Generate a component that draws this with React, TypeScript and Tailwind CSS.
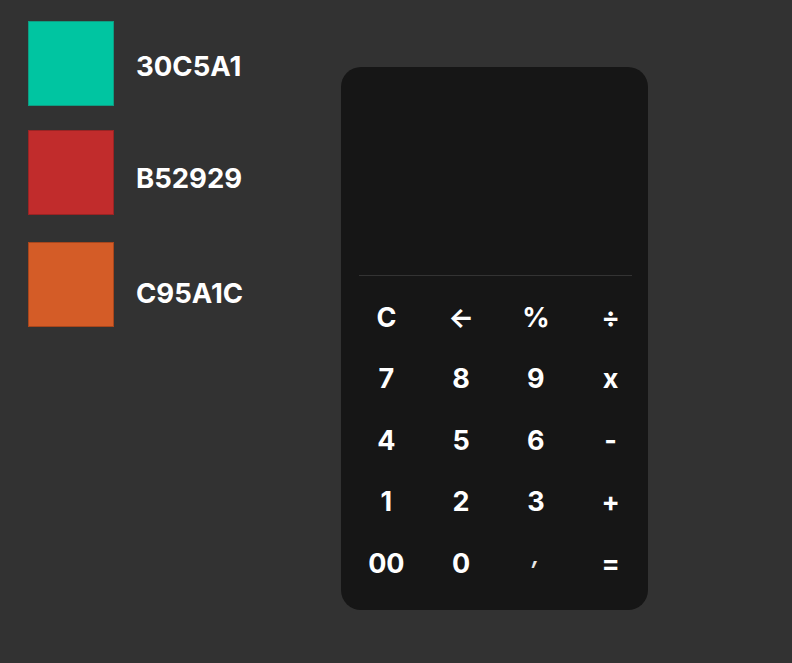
import React from 'react';

const swatches = [
  { hex: '30C5A1', bg: 'bg-[#00c5a1]', border: 'border-[#0f9c82]', top: 'mt-0', pad: 'pt-[6px]' },
  { hex: 'B52929', bg: 'bg-[#c12c2c]', border: 'border-[#9a2424]', top: 'mt-[24px]', pad: 'pt-[12px]' },
  { hex: 'C95A1C', bg: 'bg-[#d45c27]', border: 'border-[#a8461c]', top: 'mt-[27px]', pad: 'pt-[18px]' },
];

const keys = ['C', '←', '%', '÷', '7', '8', '9', 'x', '4', '5', '6', '-', '1', '2', '3', '+', '00', '0', ',', '='];

export default function App() {
  return (
    <div className="w-[792px] h-[663px] bg-[#323232] flex text-white font-['Inter',sans-serif] overflow-hidden">
      {/* Palette */}
      <div className="w-[341px] shrink-0 pl-[28px] pt-[21px] flex flex-col">
        {swatches.map((s) => (
          <div key={s.hex} className={`flex h-[85px] ${s.top}`}>
            <div className={`w-[86px] h-[85px] border ${s.bg} ${s.border}`} />
            <div className={`ml-[22px] h-full flex items-center ${s.pad}`}>
              <span className="text-[27.5px] font-bold leading-none">{s.hex}</span>
            </div>
          </div>
        ))}
      </div>

      {/* Calculator */}
      <div className="mt-[67px] w-[307px] h-[543px] bg-[#161616] rounded-[20px] flex flex-col">
        <div className="h-[209px] ml-[18px] mr-[16px] border-b border-[#333333]" />
        <div className="pl-[8px] pt-[11px] grid grid-cols-4">
          {keys.map((k) => (
            <div key={k} className="h-[61.5px] flex items-center justify-center text-[27px] font-bold">
              {k === ',' ? <span className="-translate-y-[8px] text-[24px] font-semibold text-[#e8e8e8] italic">,</span> : k}
            </div>
          ))}
        </div>
      </div>
    </div>
  );
}
